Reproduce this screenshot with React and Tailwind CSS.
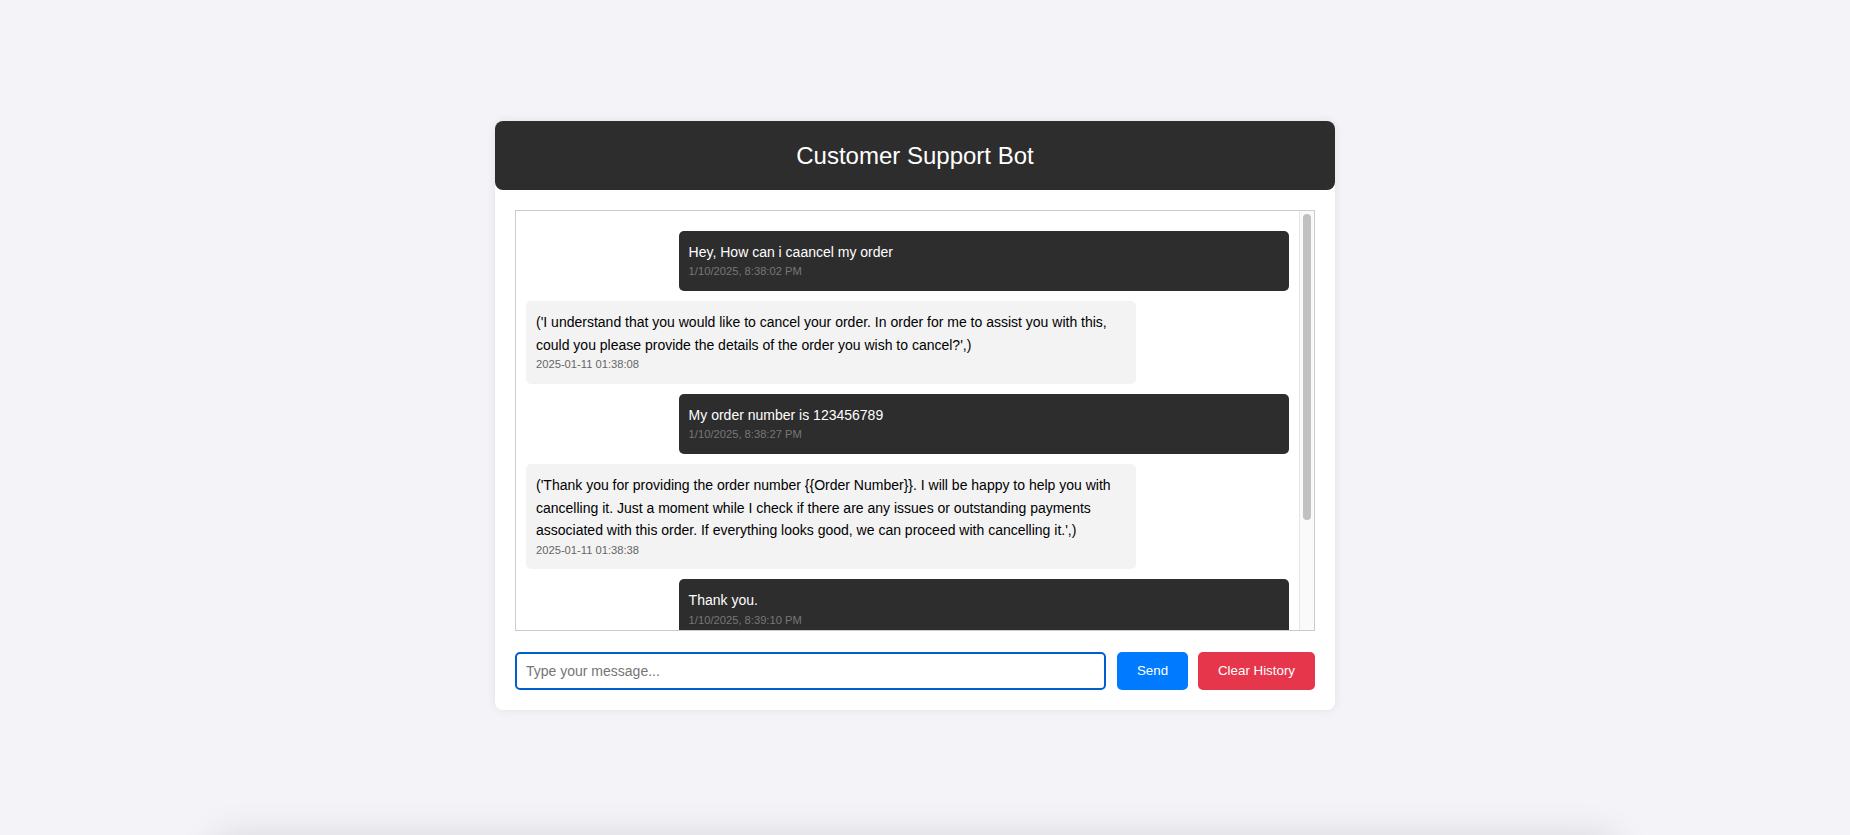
import React from "react";

const messages = [
  { from: "user", text: "Hey, How can i caancel my order", ts: "1/10/2025, 8:38:02 PM" },
  {
    from: "bot",
    text: "('I understand that you would like to cancel your order. In order for me to assist you with this, could you please provide the details of the order you wish to cancel?',)",
    ts: "2025-01-11 01:38:08",
  },
  { from: "user", text: "My order number is 123456789", ts: "1/10/2025, 8:38:27 PM" },
  {
    from: "bot",
    text: "('Thank you for providing the order number {{Order Number}}. I will be happy to help you with cancelling it. Just a moment while I check if there are any issues or outstanding payments associated with this order. If everything looks good, we can proceed with cancelling it.',)",
    ts: "2025-01-11 01:38:38",
  },
  { from: "user", text: "Thank you.", ts: "1/10/2025, 8:39:10 PM" },
  { from: "bot", text: "('You are welcome! Is there anything else I can help you with?',)", ts: "2025-01-11 01:39:12" },
];

export default function App() {
  return (
    <div className="w-full h-[835px] overflow-hidden bg-[#f4f3f8] flex flex-col items-center pr-[20px] font-['Liberation_Sans',Arial,sans-serif]">
      <div className="w-[840px] mt-[121px] bg-white rounded-lg shadow-[0_0_10px_rgba(0,0,0,0.08)] flex flex-col shrink-0">
        <div className="h-[69px] bg-[#2d2d2d] rounded-lg flex items-center justify-center text-white text-[24px]">
          Customer Support Bot
        </div>
        <div className="p-[20px] flex flex-col">
          <div className="h-[421px] border border-[#cccccc] flex">
            <div className="flex-1 overflow-hidden p-[10px]">
              {messages.map((m, i) =>
                m.from === "user" ? (
                  <div
                    key={i}
                    className="max-w-[80%] ml-auto my-[10px] p-[10px] rounded-[5px] bg-[#2d2d2d] text-white text-[14px] leading-[1.6]"
                  >
                    <div>{m.text}</div>
                    <div className="text-[11.2px] leading-[1.6] text-[#777777]">{m.ts}</div>
                  </div>
                ) : (
                  <div
                    key={i}
                    className="max-w-[80%] mr-auto my-[10px] p-[10px] rounded-[5px] bg-[#f3f3f3] text-black text-[14px] leading-[1.6]"
                  >
                    <div>{m.text}</div>
                    <div className="text-[11.2px] leading-[1.6] text-[#666666]">{m.ts}</div>
                  </div>
                )
              )}
            </div>
            <div className="w-[15px] bg-[#fafafa] border-l border-[#e6e6e6] flex justify-center shrink-0">
              <div className="w-[8px] h-[306px] mt-[3px] rounded-full bg-[#c1c1c1]" />
            </div>
          </div>
          <div className="mt-[21px] flex h-[38px]">
            <input
              autoFocus
              type="text"
              placeholder="Type your message..."
              className="flex-1 min-w-0 border-2 border-[#005fcc] rounded-[5px] px-[9px] text-[14px] text-black outline-none placeholder:text-[#757575] font-['Liberation_Sans',Arial,sans-serif]"
            />
            <button className="ml-[11px] w-[71px] rounded-[5px] bg-[#007bff] text-white text-[13.33px] font-['Liberation_Sans',Arial,sans-serif]">
              Send
            </button>
            <button className="ml-[10px] w-[117px] rounded-[5px] bg-[#e5364b] text-white text-[13.33px] font-['Liberation_Sans',Arial,sans-serif]">
              Clear History
            </button>
          </div>
        </div>
      </div>
      <div className="mt-[130px] w-[1400px] h-[100px] shrink-0 bg-[#f4f3f8] rounded-lg shadow-[0_0_40px_rgba(0,0,0,0.14)]" />
    </div>
  );
}
